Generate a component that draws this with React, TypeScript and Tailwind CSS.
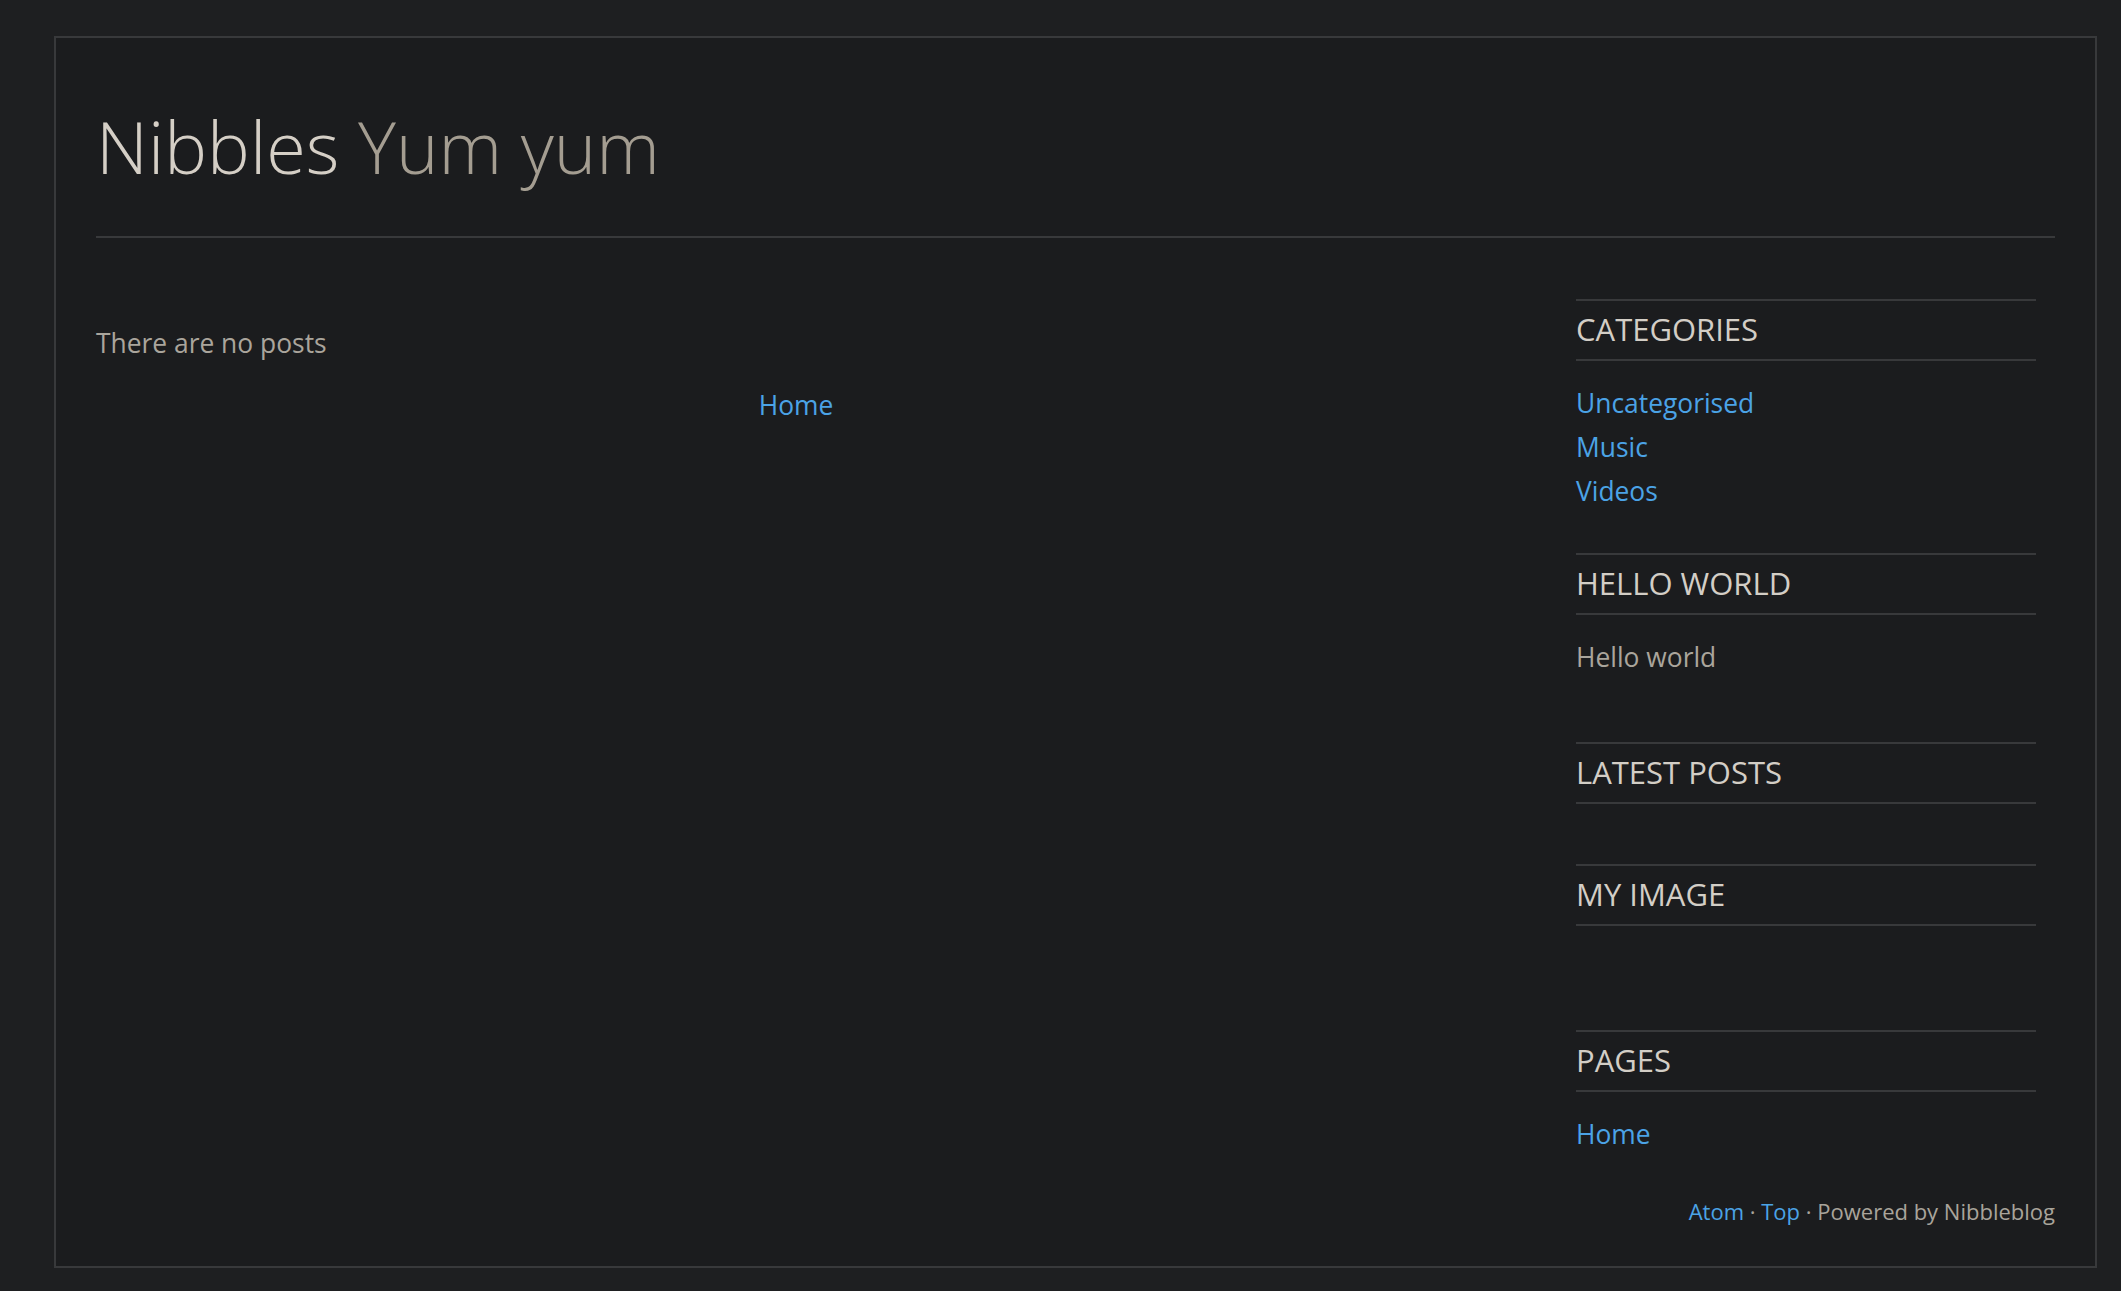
const font = { fontFamily: '"Open Sans", "Noto Sans", sans-serif' };

function Widget({ title, children, contentClass }: { title: string; children?: React.ReactNode; contentClass: string }) {
  return (
    <section className="mb-[40px]">
      <h3 className="border-y-2 border-[#38393b] pt-[7px] pb-[9px] text-[31px] leading-[42px] font-normal uppercase text-[#d3cec6]">
        {title}
      </h3>
      <div className={contentClass}>{children}</div>
    </section>
  );
}

function Link({ children }: { children: React.ReactNode }) {
  return (
    <a href="#" className="text-[#4ba3e6] no-underline">
      {children}
    </a>
  );
}

export default function App() {
  return (
    <div className="min-h-screen bg-[#1e1f21] pt-[36px] pb-[22px] pl-[54px] pr-[24px]" style={font}>
      <div className="w-[2043px] border-2 border-[#38393b] bg-[#1b1c1e] px-[40px] pt-[59px] pb-[40px]">
        <header>
          <h1 className="text-[72px] leading-[98px] font-light text-[#d5cfc6]">
            Nibbles <span className="text-[#a49d91]">Yum yum</span>
          </h1>
          <div className="mt-[41px] h-[2px] bg-[#38393b]" />
        </header>

        <div className="mt-[61px] flex">
          <main className="w-[1400px] pt-[22px] text-[26.4px] leading-[44px] text-[#aaa59c]">
            <p>There are no posts</p>
            <div className="mt-[18px] text-center">
              <Link>Home</Link>
            </div>
          </main>

          <aside className="ml-[80px] w-[460px] text-[26.4px] leading-[44px]">
            <Widget title="Categories" contentClass="pt-[20px]">
              <ul>
                <li><Link>Uncategorised</Link></li>
                <li><Link>Music</Link></li>
                <li><Link>Videos</Link></li>
              </ul>
            </Widget>
            <Widget title="Hello world" contentClass="pt-[20px] pb-[23px] text-[#aaa59c]">
              <p>Hello world</p>
            </Widget>
            <Widget title="Latest posts" contentClass="pt-[20px]" />
            <Widget title="My image" contentClass="pt-[20px] h-[64px]" />
            <Widget title="Pages" contentClass="pt-[20px]">
              <ul>
                <li><Link>Home</Link></li>
              </ul>
            </Widget>
          </aside>
        </div>

        <footer className="text-right text-[22px] leading-[30px] text-[#a9a49b]">
          <Link>Atom</Link> · <Link>Top</Link> · Powered by Nibbleblog
        </footer>
      </div>
    </div>
  );
}
